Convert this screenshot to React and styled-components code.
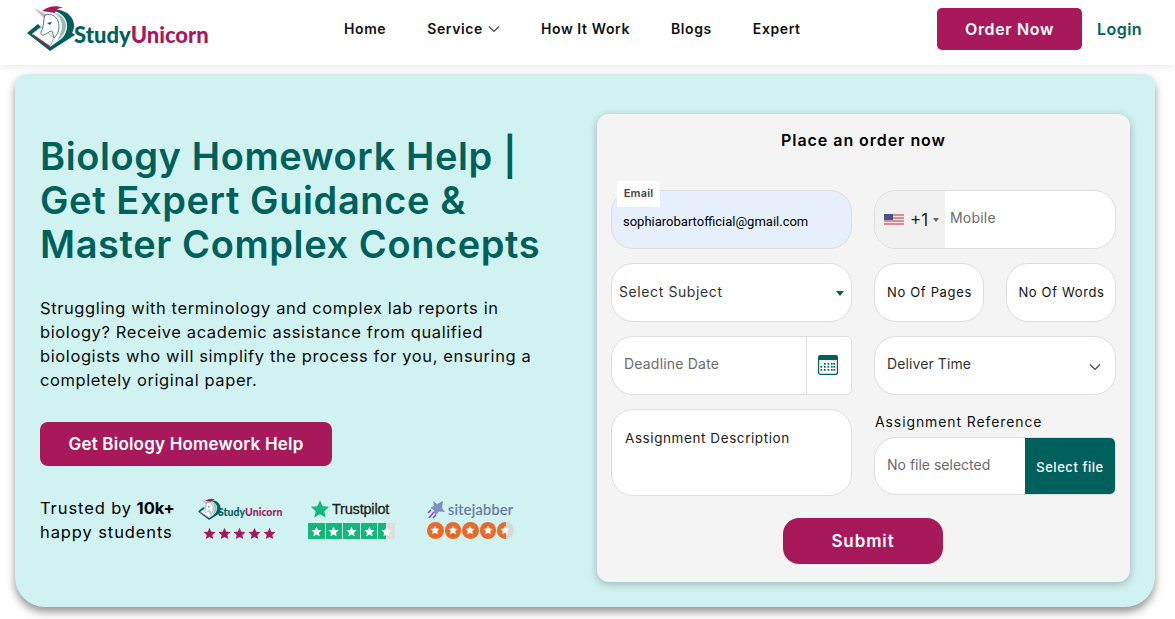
import styled, { createGlobalStyle } from "styled-components";

const teal = "#00615c";
const berry = "#a8195c";

const Global = createGlobalStyle`
* { box-sizing: border-box; }
html, body { margin: 0; background: #fff; overflow: hidden; }
body { font-family: "Inter", "Open Sans", sans-serif; color: #000; }
`;

const Page = styled.div`
width: 1175px;
height: 619px;
overflow: hidden;
`;

const Head = styled.header`
height: 65px;
display: flex;
align-items: center;
padding: 0 33px 8px 27px;
background: #fff;
box-shadow: 0 2px 8px rgba(0,0,0,.09);
position: relative;
`;

const Brand = styled.a`
display: flex;
align-items: center;
width: 317px;
`;

const BrandText = styled.span`
font-family: "Lato", sans-serif;
font-weight: 900;
font-size: ${(p) => p.$size || 22}px;
letter-spacing: ${(p) => p.$track ?? 0}px;
margin-left: ${(p) => p.$gap ?? -1}px;
margin-top: ${(p) => p.$top ?? 11}px;
color: ${teal};
b { color: ${berry}; font-weight: 900; }
`;

const Menu = styled.nav`
display: flex;
align-items: center;
gap: 41px;
flex: 1;
`;

const MenuItem = styled.a`
display: flex;
align-items: center;
gap: 5px;
font-size: 14px;
font-weight: 600;
letter-spacing: 0.6px;
color: #111;
`;

const OrderBtn = styled.button`
width: 145px;
height: 42px;
border: 0;
border-radius: 5px;
background: ${berry};
color: #fff;
font: 600 16px "Inter", sans-serif;
letter-spacing: 0.65px;
`;

const Login = styled.a`
margin-left: 15px;
width: 45px;
font-size: 16px;
font-weight: 600;
letter-spacing: 0.45px;
color: ${teal};
`;

const Hero = styled.section`
margin: 9px 20px 0 15px;
height: 533px;
padding: 40px 25px 25px 25px;
display: flex;
justify-content: space-between;
background: #d0f2f1;
border-radius: 12px 12px 30px 30px;
box-shadow: 0 5px 8px rgba(0,0,0,.42);
`;

const Left = styled.div`
width: 520px;
padding-top: 20px;
`;

const Title = styled.h1`
margin: 0;
font-size: 38px;
line-height: 44px;
font-weight: 600;
letter-spacing: 0.6px;
color: ${teal};
`;

const Lead = styled.p`
margin: 30px 0 0;
max-width: 495px;
font-size: 16.5px;
line-height: 24px;
letter-spacing: 0.6px;
color: #0b0b0b;
`;

const HelpBtn = styled.button`
display: block;
margin-top: 30px;
width: 292px;
height: 44px;
border: 0;
border-radius: 8px;
background: ${berry};
color: #fff;
font: 600 17px "Inter", sans-serif;
letter-spacing: 0.2px;
`;

const Trust = styled.div`
display: flex;
margin-top: 30px;
`;

const TrustText = styled.div`
width: 158px;
font-size: 16.5px;
line-height: 24px;
letter-spacing: 0.9px;
b { font-weight: 700; letter-spacing: 0; margin-left: -1px; }
`;

const Badge = styled.div`
width: ${(p) => p.$w}px;
display: flex;
flex-direction: column;
align-items: flex-start;
`;

const BadgeTop = styled.div`
height: 26px;
display: flex;
align-items: center;
`;

const PilotName = styled.span`
font-family: "Liberation Sans", sans-serif;
font-size: 14.5px;
letter-spacing: -0.2px;
-webkit-text-stroke: 0.3px #222;
color: #222;
`;

const JabberName = styled.span`
font-family: "Lato", sans-serif;
font-size: 14.5px;
letter-spacing: 0.3px;
-webkit-text-stroke: 0.2px #67749c;
color: #67749c;
margin-left: 1px;
`;

const FormCard = styled.form`
width: 533px;
height: 468px;
padding: 16px 14px 18px;
background: #f4f4f4;
border-radius: 12px;
box-shadow: 0 2px 8px rgba(0,0,0,.25);
`;

const FormTitle = styled.h2`
margin: 0;
text-align: center;
font-size: 16px;
line-height: 20px;
font-weight: 600;
letter-spacing: 0.95px;
`;

const Grid = styled.div`
display: grid;
grid-template-columns: 241px 242px;
grid-template-rows: 59px 59px 59px 87px;
column-gap: 22px;
row-gap: 14px;
margin-top: 40px;
`;

const Field = styled.div`
position: relative;
height: ${(p) => p.$h || "100%"};
display: flex;
align-items: ${(p) => p.$items || "center"};
padding: ${(p) => p.$pad || "0 12px"};
border: 1px solid #dedede;
border-radius: ${(p) => p.$radius || "22px"};
background: ${(p) => p.$bg || "#fff"};
font-size: 13.5px;
letter-spacing: 0.55px;
color: ${(p) => p.$color || "#222"};
overflow: ${(p) => p.$clip ? "hidden" : "visible"};
`;

const FloatLabel = styled.span`
position: absolute;
top: -10px;
left: 5px;
width: 43px;
height: 26px;
padding-top: 4px;
text-align: center;
background: #fff;
font-size: 11px;
line-height: 16px;
font-weight: 600;
letter-spacing: 0.2px;
color: #444;
`;

const EmailValue = styled.span`
font-family: "Roboto", "Liberation Sans", sans-serif;
font-size: 13px;
letter-spacing: 0;
color: #000;
margin-left: -1px;
padding-top: 3px;
`;

const Split = styled.div`
display: flex;
justify-content: space-between;
`;

const SmallField = styled(Field)`
width: 110px;
justify-content: center;
padding: 0 0 2px 1px;
font-size: 13px;
letter-spacing: 0.65px;
color: #111;
`;

const DialCode = styled.div`
width: 70px;
height: 100%;
display: flex;
align-items: center;
padding: 0 0 0 9px;
background: #f1f1f1;
font-size: 17px;
color: #222;
letter-spacing: 0;
margin-right: 5px;
span { margin: 0 5px 0 6px; }
i { border: 3.5px solid transparent; border-top: 4px solid #666; border-bottom: 0; }
`;

const Hint = styled.span`
padding-bottom: ${(p) => p.$up ?? 5}px;
font-size: 14px;
letter-spacing: ${(p) => p.$track ?? 0.2}px;
color: ${(p) => p.$color || "#6b6b6b"};
`;

const Caret = styled.i`
margin-left: auto;
margin-top: 2px;
border: 4.5px solid transparent;
border-top: 5px solid ${teal};
border-bottom: 0;
`;

const CalCell = styled.div`
margin-left: auto;
width: 45px;
height: 100%;
display: flex;
align-items: center;
justify-content: center;
padding: 0 3px 2px 0;
border-left: 1px solid #dedede;
`;

const RefBlock = styled.div`
display: flex;
flex-direction: column;
`;

const RefLabel = styled.div`
height: 28px;
padding: 3px 0 0 1px;
font-size: 14px;
line-height: 20px;
letter-spacing: 0.9px;
color: #111;
`;

const FileBtn = styled.div`
margin-left: auto;
width: 90px;
height: 100%;
display: flex;
align-items: center;
justify-content: center;
padding-top: 2px;
background: ${teal};
color: #fff;
font-size: 13px;
font-weight: 500;
letter-spacing: 0.55px;
`;

const DescText = styled.span`
letter-spacing: 0.58px;
`;

const Submit = styled.button`
display: block;
margin: 22px 0 0 172px;
width: 160px;
height: 46px;
border: 0;
border-radius: 16px;
background: ${berry};
color: #fff;
font: 600 17px "Inter", sans-serif;
letter-spacing: 0.9px;
padding-bottom: 2px;
`;

const ChevronSlot = styled.span`
margin-left: auto;
margin-right: 2px;
`;

const StarSlot = styled.span`
display: flex;
margin: 0 2px;
`;

function UnicornLogo({ size = 48 }) {
  return (
    <svg width={size} height={size} viewBox="0 0 48 48">
      <path d="M0 28 L11 19 L14 22 L5 29 L23 42 L44 27 L48 30 L23 46Z" fill={teal} />
      <path d="M5 29 L14 22 L27 33 L23 41Z" fill="#fff" stroke="#7da5a2" strokeWidth=".8" />
      <path d="M6 30 L23 42" stroke={berry} strokeWidth="1.2" />
      <path d="M25 5 C38 3 48 12 47 22 C46 31 38 37 27 41 C36 34 41 27 40 19 C39 11 32 7 25 5Z" fill={teal} />
      <path d="M27 8 C34 9 39 14 39 21 C39 27 35 32 30 36 C34 29 36 22 34 16 C33 12 30 10 27 8Z" fill="#9cb8b7" />
      <path d="M15 6 C21 1 30 0 36 3 C31 3 29 5 28 8 C24 7 19 7 15 6Z" fill={berry} />
      <path d="M17 13 L7 3 L20 10Z" fill="#d9a9bf" />
      <path d="M18 10 C24 8 29 11 31 16 C33 22 32 28 27 33 L25 26 C22 26 20 29 17 30 C14 31 13 28 15 25 C17 21 16 15 18 10Z" fill="#fff" stroke="#4e7f7c" strokeWidth="1" />
      <path d="M20 18 L25 17 L23 20Z" fill="#1d4f4c" />
    </svg>
  );
}

function Star({ size = 12, fill = "#fff" }) {
  return (
    <svg width={size} height={size} viewBox="0 0 24 24">
      <path d="M12 1.5l3.2 7.1 7.8.8-5.8 5.2 1.7 7.7L12 18.4l-6.9 3.9 1.7-7.7L1 9.4l7.8-.8z" fill={fill} />
    </svg>
  );
}

const Row = styled.div`
display: flex;
align-items: center;
gap: ${(p) => p.$gap || 0}px;
margin-top: ${(p) => p.$top || 0}px;
margin-left: ${(p) => p.$left || 0}px;
`;

const PilotBox = styled.span`
width: 16.6px;
height: 16px;
display: flex;
align-items: center;
justify-content: center;
background: ${(p) => p.$half ? "linear-gradient(90deg,#14b67a 50%,#dedede 50%)" : "#14b67a"};
`;

const JabberDot = styled.span`
width: 16.5px;
height: 16.5px;
border-radius: 50%;
display: flex;
align-items: center;
justify-content: center;
background: ${(p) => p.$half ? "linear-gradient(90deg,#e66a2c 55%,#d8d8d8 55%)" : "#e66a2c"};
`;

function Flag() {
  return (
    <svg width="20" height="11" viewBox="0 0 20 11">
      <rect width="20" height="11" fill="#e08a93" />
      <path d="M0 2.5h20M0 5.5h20M0 8.5h20" stroke="#f3e5e6" strokeWidth="1" />
      <rect width="9" height="6" fill="#4a5488" />
    </svg>
  );
}

function Calendar() {
  return (
    <svg width="20" height="20" viewBox="0 0 20 20">
      <rect x=".6" y=".6" width="18.8" height="18.8" rx="2" fill="#fff" stroke={teal} strokeWidth="1.2" />
      <rect x=".6" y=".6" width="18.8" height="4.5" fill={teal} />
      {[8, 11, 14].map((y) => [3, 6.5, 10, 13.5, 16].map((x) => (
        y === 8 && x < 6 ? null : <rect key={`${x}-${y}`} x={x - 0.5} y={y} width="1.7" height="1.7" fill={teal} />
      )))}
    </svg>
  );
}

function Rocket() {
  return (
    <svg width="20" height="20" viewBox="0 0 20 20">
      <path d="M6 2l4 3 6-3-1 7 3 4-6-.5L8 17l-1-6-4-2 4-2z" fill="#7f8fc0" />
      <path d="M2 19l5-6M1 14l3-3M6 19l3-3" stroke="#8a3fe0" strokeWidth="1.5" />
    </svg>
  );
}

function Chevron() {
  return (
    <svg width="12" height="8" viewBox="0 0 12 8" fill="none" stroke="#444" strokeWidth="1.2">
      <path d="M1 1.5l5 5 5-5" />
    </svg>
  );
}

export default function App() {
  return (
    <Page>
      <Global />
      <Head>
        <Brand>
          <UnicornLogo />
          <BrandText>Study<b>Unicorn</b></BrandText>
        </Brand>
        <Menu>
          <MenuItem>Home</MenuItem>
          <MenuItem>Service <Chevron /></MenuItem>
          <MenuItem>How It Work</MenuItem>
          <MenuItem>Blogs</MenuItem>
          <MenuItem>Expert</MenuItem>
        </Menu>
        <OrderBtn type="button">Order Now</OrderBtn>
        <Login>Login</Login>
      </Head>
      <Hero>
        <Left>
          <Title>Biology Homework Help | Get Expert Guidance &amp; Master Complex Concepts</Title>
          <Lead>Struggling with terminology and complex lab reports in biology? Receive academic assistance from qualified biologists who will simplify the process for you, ensuring a completely original paper.</Lead>
          <HelpBtn type="button">Get Biology Homework Help</HelpBtn>
          <Trust>
            <TrustText>Trusted by <b>10k+</b><br />happy students</TrustText>
            <Badge $w={110}>
              <BadgeTop>
                <UnicornLogo size={23} />
                <BrandText $size={10.5} $track={0} $gap={-3} $top={6}>Study<b>Unicorn</b></BrandText>
              </BadgeTop>
              <Row $gap={2} $top={5} $left={5}>
                {[0, 1, 2, 3, 4].map((i) => <Star key={i} size={13} fill={berry} />)}
              </Row>
            </Badge>
            <Badge $w={119}>
              <BadgeTop>
                <StarSlot><Star size={20} fill="#12b97c" /></StarSlot>
                <PilotName>Trustpilot</PilotName>
              </BadgeTop>
              <Row $gap={1} $top={1}>
                {[0, 1, 2, 3, 4].map((i) => <PilotBox key={i} $half={i === 4}><Star size={11} /></PilotBox>)}
              </Row>
            </Badge>
            <Badge $w={90}>
              <BadgeTop>
                <Rocket />
                <JabberName>sitejabber</JabberName>
              </BadgeTop>
              <Row $gap={1} $top={0}>
                {[0, 1, 2, 3, 4].map((i) => <JabberDot key={i} $half={i === 4}><Star size={10} /></JabberDot>)}
              </Row>
            </Badge>
          </Trust>
        </Left>
        <FormCard>
          <FormTitle>Place an order now</FormTitle>
          <Grid>
            <Field $bg="#e6effc">
              <FloatLabel>Email</FloatLabel>
              <EmailValue>sophiarobartofficial@gmail.com</EmailValue>
            </Field>
            <Field $pad="0" $clip>
              <DialCode><Flag /><span>+1</span><i /></DialCode>
              <Hint>Mobile</Hint>
            </Field>
            <Field $pad="0 7px">
              <Hint $color="#333" $up={3} $track={0.6}>Select Subject</Hint>
              <Caret />
            </Field>
            <Split>
              <SmallField>No Of Pages</SmallField>
              <SmallField>No Of Words</SmallField>
            </Split>
            <Field $pad="0 0 0 12px" $radius="22px 6px 6px 22px" $clip>
              <Hint>Deadline Date</Hint>
              <CalCell><Calendar /></CalCell>
            </Field>
            <Field>
              <Hint $color="#333" $track={0.1}>Deliver Time</Hint>
              <ChevronSlot><Chevron /></ChevronSlot>
            </Field>
            <Field $items="flex-start" $pad="20px 13px">
              <DescText>Assignment Description</DescText>
            </Field>
            <RefBlock>
              <RefLabel>Assignment Reference</RefLabel>
              <Field $h="58px" $pad="0 0 0 12px" $radius="22px 6px 6px 22px" $clip>
                <Hint $up={4} $track={0}>No file selected</Hint>
                <FileBtn>Select file</FileBtn>
              </Field>
            </RefBlock>
          </Grid>
          <Submit type="button">Submit</Submit>
        </FormCard>
      </Hero>
    </Page>
  );
}
